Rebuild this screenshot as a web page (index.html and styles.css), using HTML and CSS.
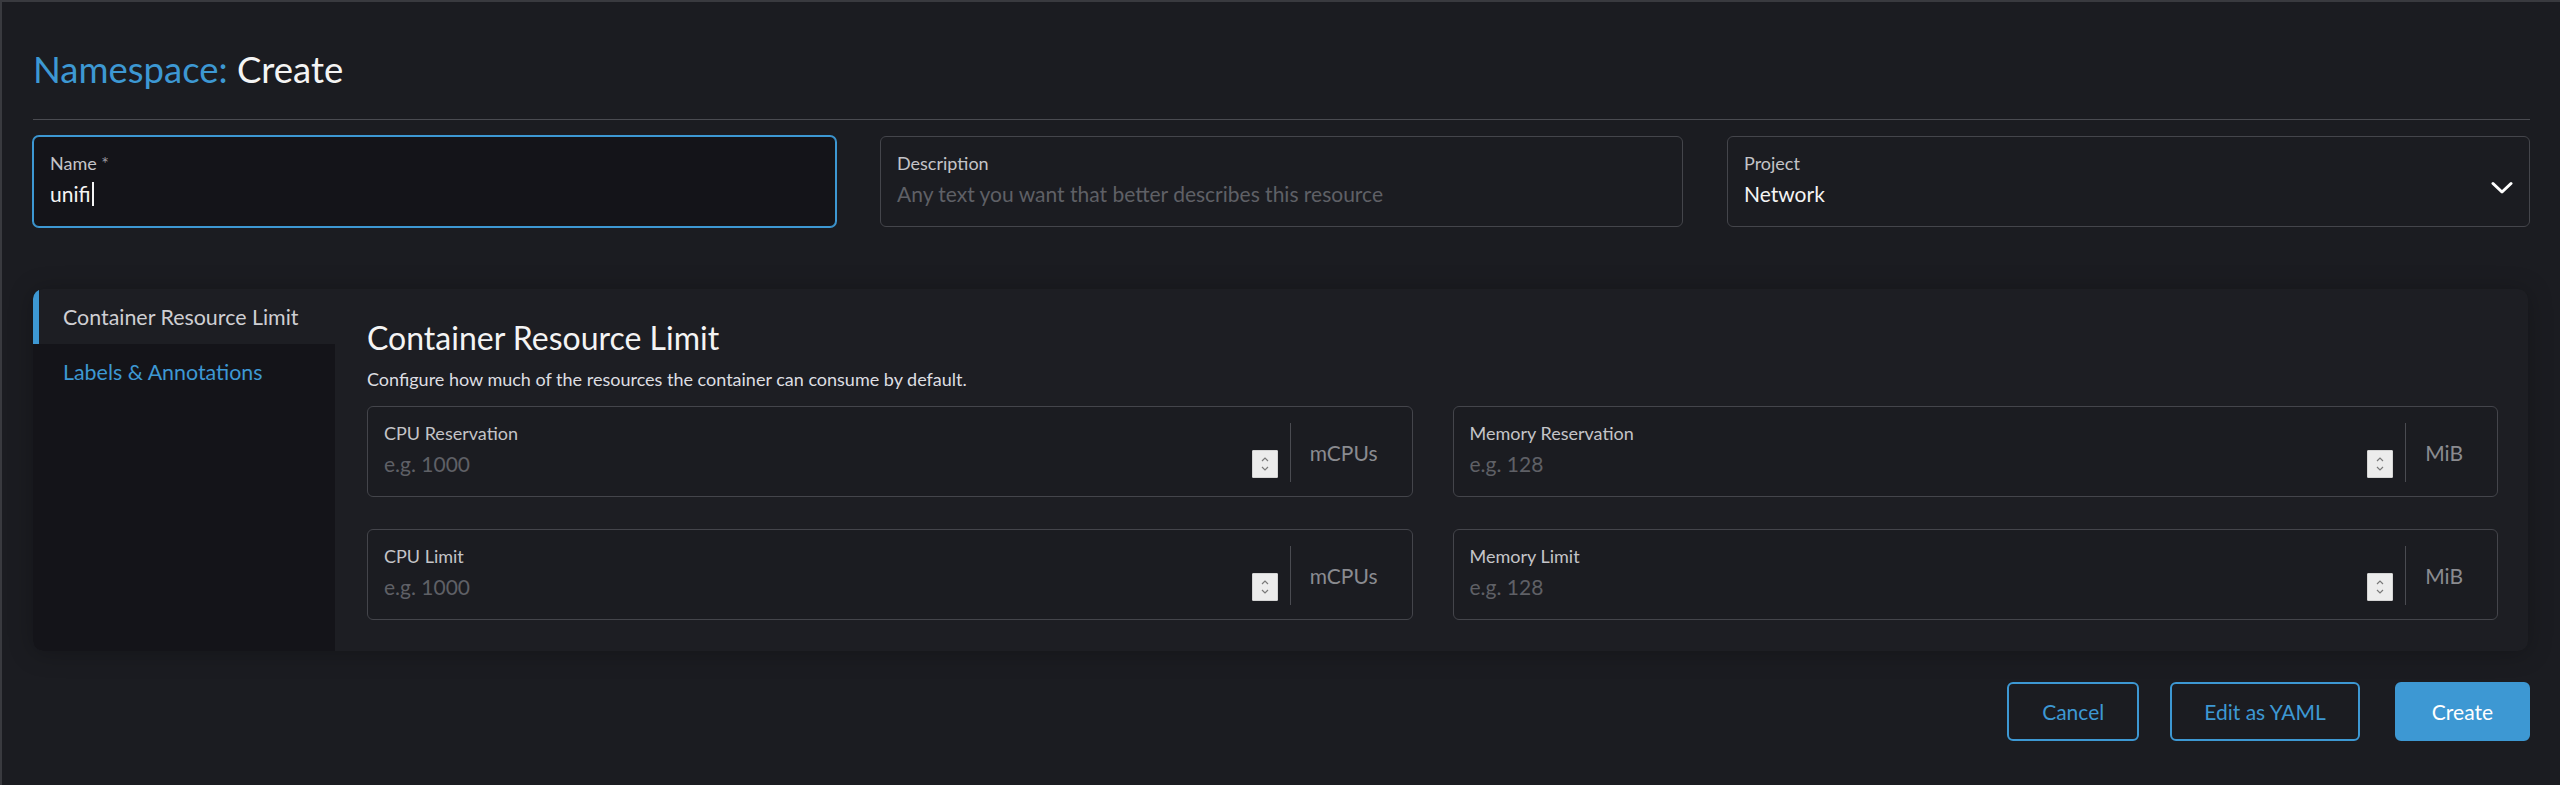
FILE: index.html
```html
<!DOCTYPE html>
<html lang="en">
<head>
<meta charset="utf-8">
<title>Namespace: Create</title>
<link rel="stylesheet" href="styles.css">
</head>
<body>
<div class="page">
  <h1 class="title"><span class="title-type">Namespace:</span> <span class="title-mode">Create</span></h1>
  <div class="rule"></div>

  <div class="top-row">
    <div class="field focused">
      <div class="field-label">Name <span class="req">*</span></div>
      <div class="field-value">unifi<span class="caret"></span></div>
    </div>
    <div class="field">
      <div class="field-label">Description</div>
      <div class="field-value placeholder">Any text you want that better describes this resource</div>
    </div>
    <div class="field select">
      <div class="select-body">
        <div class="field-label">Project</div>
        <div class="field-value">Network</div>
      </div>
      <svg class="chevron" width="22" height="14" viewBox="0 0 22 14"><path d="M2 2.5 L11 11 L20 2.5" fill="none" stroke="#ffffff" stroke-width="3" stroke-linecap="round" stroke-linejoin="round"/></svg>
    </div>
  </div>

  <div class="tabbed">
    <div class="tabs">
      <div class="tab active">Container Resource Limit</div>
      <div class="tab">Labels &amp; Annotations</div>
    </div>
    <div class="tab-content">
      <h3 class="section-title">Container Resource Limit</h3>
      <p class="section-desc">Configure how much of the resources the container can consume by default.</p>
      <div class="limits">
        <div class="field unit-field">
          <div class="unit-main">
            <div class="field-label">CPU Reservation</div>
            <div class="unit-input">
              <span class="field-value placeholder">e.g. 1000</span>
              <span class="spinner"><svg width="10" height="20" viewBox="0 0 10 20"><path d="M2 7 L5 4 L8 7 M2 13 L5 16 L8 13" fill="none" stroke="#7a7a7a" stroke-width="1.2"/></svg></span>
            </div>
          </div>
          <div class="unit-addon">mCPUs</div>
        </div>
        <div class="field unit-field">
          <div class="unit-main">
            <div class="field-label">Memory Reservation</div>
            <div class="unit-input">
              <span class="field-value placeholder">e.g. 128</span>
              <span class="spinner"><svg width="10" height="20" viewBox="0 0 10 20"><path d="M2 7 L5 4 L8 7 M2 13 L5 16 L8 13" fill="none" stroke="#7a7a7a" stroke-width="1.2"/></svg></span>
            </div>
          </div>
          <div class="unit-addon">MiB</div>
        </div>
        <div class="field unit-field">
          <div class="unit-main">
            <div class="field-label">CPU Limit</div>
            <div class="unit-input">
              <span class="field-value placeholder">e.g. 1000</span>
              <span class="spinner"><svg width="10" height="20" viewBox="0 0 10 20"><path d="M2 7 L5 4 L8 7 M2 13 L5 16 L8 13" fill="none" stroke="#7a7a7a" stroke-width="1.2"/></svg></span>
            </div>
          </div>
          <div class="unit-addon">mCPUs</div>
        </div>
        <div class="field unit-field">
          <div class="unit-main">
            <div class="field-label">Memory Limit</div>
            <div class="unit-input">
              <span class="field-value placeholder">e.g. 128</span>
              <span class="spinner"><svg width="10" height="20" viewBox="0 0 10 20"><path d="M2 7 L5 4 L8 7 M2 13 L5 16 L8 13" fill="none" stroke="#7a7a7a" stroke-width="1.2"/></svg></span>
            </div>
          </div>
          <div class="unit-addon">MiB</div>
        </div>
      </div>
    </div>
  </div>

  <div class="actions">
    <button class="btn btn-outline btn-cancel">Cancel</button>
    <button class="btn btn-outline btn-yaml">Edit as YAML</button>
    <button class="btn btn-primary">Create</button>
  </div>
</div>
</body>
</html>
```

FILE: styles.css
```css
html, body {
  margin: 0;
  padding: 0;
  background: #1b1c21;
}

body {
  font-family: Lato, "Noto Sans", sans-serif;
  color: #e6e6e6;
}

.page {
  box-sizing: border-box;
  height: 785px;
  border-top: 2px solid #393a3f;
  border-left: 2px solid #393a3f;
  padding: 45px 30px 0 31px;
  background: #1b1c21;
}

.title {
  margin: 0;
  font-size: 36.5px;
  line-height: 44px;
  font-weight: 400;
}

.title-type {
  color: #3d98d3;
}

.title-mode {
  color: #f4f4f4;
}

.rule {
  height: 1px;
  background: #4a4b51;
  margin-top: 28px;
}

.top-row {
  display: grid;
  grid-template-columns: repeat(3, 1fr);
  gap: 44px;
  margin-top: 16px;
}

.field {
  box-sizing: border-box;
  height: 91px;
  border: 1px solid #44454b;
  border-radius: 6px;
  padding: 15px 16px 0 16px;
  background: #1b1c21;
}

.field.focused {
  border-color: #3d98d3;
  box-shadow: 0 0 0 1px #3d98d3;
  background: #141419;
}

.field-label {
  font-size: 18px;
  line-height: 22px;
  color: #c4c4c8;
}

.req {
  color: #9a9aa0;
}

.field-value {
  display: flex;
  align-items: center;
  margin-top: 7px;
  font-size: 21px;
  line-height: 26px;
  color: #f4f4f4;
}

.field-value.placeholder {
  color: #5f6066;
}

.caret {
  display: inline-block;
  width: 2px;
  height: 24px;
  background: #f4f4f4;
  margin-left: 1px;
}

.field.select {
  display: flex;
  align-items: center;
  padding-right: 16px;
}

.select-body {
  flex: 1;
  align-self: flex-start;
}

.chevron {
  display: block;
  margin-top: -2px;
}

.tabbed {
  display: flex;
  margin-top: 62px;
  margin-right: 2px;
  height: 362px;
  border-radius: 10px;
  background: #1d1e23;
  box-shadow: 0 2px 24px rgba(0, 0, 0, 0.25);
  overflow: hidden;
}

.tabs {
  width: 302px;
  flex: none;
  background: #141419;
  border-radius: 0 0 0 10px;
}

.tab {
  border-left: 6px solid transparent;
  padding: 15px 0 14px 24px;
  font-size: 21.4px;
  line-height: 26px;
  color: #3d98d3;
}

.tab.active {
  border-left-color: #3d98d3;
  background: #1d1e23;
  color: #cfcfd3;
}

.tab-content {
  flex: 1;
  padding: 30px 30px 0 32px;
}

.section-title {
  margin: 0;
  font-size: 32px;
  line-height: 38px;
  font-weight: 400;
  color: #f4f4f4;
}

.section-desc {
  margin: 11px 0 0 0;
  font-size: 18px;
  line-height: 22px;
  color: #dedee2;
}

.limits {
  display: grid;
  grid-template-columns: 1fr 1fr;
  column-gap: 40px;
  row-gap: 32px;
  margin-top: 16px;
}

.unit-field {
  display: flex;
  align-items: stretch;
  padding-right: 0;
  background: #1b1c21;
}

.unit-main {
  flex: 1;
  min-width: 0;
}

.unit-input {
  display: flex;
  align-items: flex-start;
  justify-content: space-between;
  padding-right: 12px;
}

.spinner {
  box-sizing: border-box;
  width: 26px;
  height: 28px;
  margin-top: 6px;
  background: #ececec;
  border: 1px solid #d4d4d4;
  border-radius: 1px;
  display: flex;
  align-items: center;
  justify-content: center;
}

.spinner svg {
  display: block;
}

.unit-addon {
  box-sizing: border-box;
  height: 59px;
  margin-top: 1px;
  border-left: 1px solid #4a4b51;
  padding: 0 34px 0 19px;
  display: flex;
  align-items: center;
  font-size: 21px;
  color: #8a8b90;
}

.actions {
  display: flex;
  justify-content: flex-end;
  margin-top: 31px;
}

.btn {
  box-sizing: border-box;
  height: 59px;
  padding: 0 33px;
  border-radius: 6px;
  font-family: Lato, "Noto Sans", sans-serif;
  font-size: 21px;
  cursor: pointer;
}

.btn-yaml {
  margin-left: 31px;
  padding: 0 32px;
}

.btn-outline {
  background: transparent;
  border: 2px solid #3d98d3;
  color: #3d98d3;
}

.btn-primary {
  margin-left: 35px;
  background: #3d98d3;
  border: 2px solid #3d98d3;
  color: #ffffff;
  padding: 0 35px;
}
```
